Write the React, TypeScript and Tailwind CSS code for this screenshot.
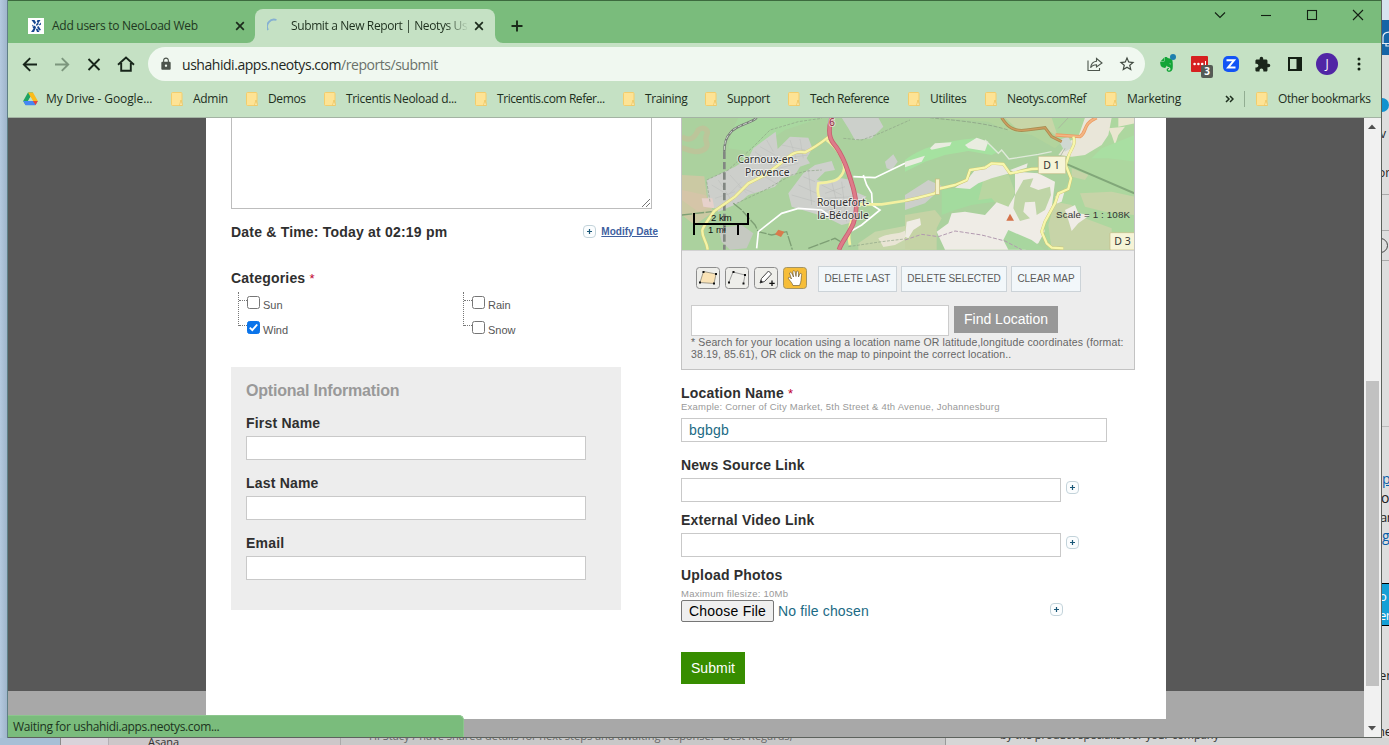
import React from "react";
import { MdExtension, MdStarBorder, MdLock } from "react-icons/md";
import { FaEvernote } from "react-icons/fa";

const UI = "font-['Open_Sans','Noto_Sans',sans-serif]";

function Folder() {
  return (
    <svg width="12" height="14" viewBox="0 0 12 14" className="shrink-0">
      <rect x="0.5" y="0.5" width="10.5" height="13" rx="1" fill="#fde395" stroke="#f3cd6c" />
      <path d="M10 8 L11.5 13.5 H8.5 Z" fill="#fdeeb5" stroke="#edc45e" strokeWidth="0.8" />
    </svg>
  );
}

function Drive() {
  return (
    <svg width="15" height="14" viewBox="0 0 15 14" className="shrink-0">
      <path d="M5 0.5 H10 L7.5 4.8 L2.6 13 L0.2 9 Z" fill="#1fa463" />
      <path d="M5 0.5 H10 L14.8 9 H9.9 Z" fill="#fbbc1b" />
      <path d="M0.2 9 H14.8 L12.4 13.3 H2.6 Z" fill="#4687f4" />
      <path d="M9.9 9 H14.8 L12.6 13 Z" fill="#e94335" />
      <path d="M7.5 5 L9.8 9 H5.2 Z" fill="#c5e1c4" />
    </svg>
  );
}

const bookmarks: { label: string; cls: string; text: string }[] = [
  { label: "Admin", cls: "w-[75px]", text: "tracking-[-0.3px]" },
  { label: "Demos", cls: "w-[78px]", text: "tracking-[-0.35px]" },
  { label: "Tricentis Neoload d...", cls: "w-[151px]", text: "tracking-[-0.32px]" },
  { label: "Tricentis.com Refer...", cls: "w-[148px]", text: "tracking-[-0.42px]" },
  { label: "Training", cls: "w-[82px]", text: "tracking-[-0.4px]" },
  { label: "Support", cls: "w-[83px]", text: "tracking-[-0.3px]" },
  { label: "Tech Reference", cls: "w-[120px]", text: "tracking-[-0.5px]" },
  { label: "Utilites", cls: "w-[77px]", text: "tracking-[-0.3px]" },
  { label: "Neotys.comRef", cls: "w-[120px]", text: "tracking-[-0.4px]" },
  { label: "Marketing", cls: "w-[120px]", text: "tracking-[-0.3px]" },
];

function Cross({ size }: { size: number }) {
  return (
    <svg width={size} height={size} viewBox="0 0 10 10" className="shrink-0">
      <path d="M1.2 1.2 L8.8 8.8 M8.8 1.2 L1.2 8.8" stroke="#1c2b1c" strokeWidth="1.7" />
    </svg>
  );
}

function TabBar() {
  return (
    <div className="flex h-[43px] border-t border-[#3c6a3e] bg-[#7abc7c]">
      <div className="flex h-full w-[247px] items-center pt-[8px] pl-[20px]">
        <svg width="16" height="16" viewBox="0 0 16 16" className="shrink-0">
          <rect width="16" height="16" fill="#fff" />
          <g fill="#17468f">
            <path d="M3.500 2 H6.500 L8 4.500 L6.800 6.500 Z M9.500 2 H12.500 L10.200 5.500 L8.700 3.500 Z" />
            <path d="M8 6.500 L9.500 4.800 L11 6 L8.500 8 Z M11 6.500 L13 4.500 V6.500 L11.500 7.500 Z" />
            <path d="M4 6.500 L6 8 L4.500 8.500 Z M4.500 9 L7 7.500 L8 9.500 L6 14 H3 L5.500 10.500 Z" />
            <path d="M9 9 L10.500 8 L13 12 L11 12.500 Z M7.800 11 L9.300 10.500 L11.500 14 H9 Z" />
          </g>
        </svg>
        <span className="ml-[8px] w-[183px] text-[12px] tracking-[-0.270px] whitespace-nowrap text-[#213821]">
          Add users to NeoLoad Web
        </span>
        <Cross size={10} />
      </div>
      <div className="relative mt-[8px] flex h-[34px] w-[240px] items-center rounded-t-[8px] bg-[#c5e1c4] pl-[12px]">
        <svg width="8" height="8" viewBox="0 0 8 8" className="absolute bottom-0 left-[-8px]">
          <path d="M8 0 V8 H0 A8 8 0 0 0 8 0" fill="#c5e1c4" />
        </svg>
        <svg width="8" height="8" viewBox="0 0 8 8" className="absolute right-[-8px] bottom-0">
          <path d="M0 0 V8 H8 A8 8 0 0 1 0 0" fill="#c5e1c4" />
        </svg>
        <svg width="14" height="16" viewBox="0 0 14 16" className="shrink-0">
          <path d="M1 12 A7 7 0 0 1 9.5 2" fill="none" stroke="#86b0d2" strokeWidth="1.800" />
        </svg>
        <span className="ml-[10px] w-[183px] bg-[linear-gradient(to_right,#1d2f1d_155px,#c5e1c4_178px)] bg-clip-text text-[12px] tracking-[-0.380px] whitespace-nowrap text-transparent">
          Submit a New Report | Neotys Us
        </span>
        <Cross size={10} />
      </div>
      <svg width="12" height="12" viewBox="0 0 12 12" className="mt-[19px] ml-[16px]">
        <path d="M6 0.5 V11.5 M0.5 6 H11.5" stroke="#1a2a1a" strokeWidth="1.9" />
      </svg>
      <svg width="152" height="14" viewBox="0 0 152 14" className="mt-[7px] mr-[15px] ml-auto" fill="none" stroke="#132013" strokeWidth="1.1">
        <path d="M1 4.5 L6 9.5 L11 4.5" />
        <path d="M47 7.5 H57" />
        <rect x="93.5" y="2.5" width="9" height="9" />
        <path d="M139 2 L149 12 M149 2 L139 12" />
      </svg>
    </div>
  );
}

function Toolbar() {
  return (
    <div className="flex h-[40px] items-center bg-[#c5e1c4] pt-[2px] pl-[14px]">
      <svg width="120" height="20" viewBox="0 0 120 20" fill="none" stroke="#17251a" strokeWidth="1.9" className="shrink-0">
        <path d="M15 10.500 H2 M8.2 4.1 L1.8 10.500 L8.2 16.900" />
        <path d="M33 10.500 H46 M39.8 4.1 L46.2 10.500 L39.8 16.900" stroke="#7c967d" />
        <path d="M66.5 5 L77.5 16 M77.5 5 L66.5 16" />
        <path d="M96 10.700 L104 3.500 L112 10.700 M99.2 9 V16.800 H108.8 V9" />
      </svg>
      <div className="ml-[6px] flex h-[34px] w-[997px] items-center rounded-full bg-[#f0f8f0] pl-[11px]">
        <MdLock size={14} color="#4b534b" />
        <span className="ml-[9px] text-[14px] tracking-[-0.460px] whitespace-nowrap text-[#1f281f]">
          ushahidi.apps.neotys.com<span className="text-[#6a716a]">/reports/submit</span>
        </span>
        <svg width="16" height="15" viewBox="0 0 16 15" className="mr-[15px] ml-auto" fill="none" stroke="#4d564d" strokeWidth="1.1">
          <path d="M1 3.5 V13.5 H12.5 V11" />
          <path d="M9.5 1.5 L15 6 L9.5 10 V7.7 C7 7.7 5 8.6 3.6 10.8 C4 7 6 4.6 9.5 4.2 Z" />
        </svg>
        <MdStarBorder size={18} color="#414a41" className="mr-[9px]" />
      </div>
      <div className="flex flex-1 items-center pl-[13px]">
        <div className="relative h-[18px] w-[18px]">
          <FaEvernote size={17} color="#12a537" className="mt-[1px]" />
          <div className="absolute top-[-1px] right-0 h-[6px] w-[6px] rounded-full bg-[#1d7fae]" />
        </div>
        <div className="relative ml-[15px] h-[16px] w-[17px] rounded-[1px] bg-[#d6201f]">
          <svg width="17" height="16" viewBox="0 0 17 16" fill="#fff">
            <circle cx="3.6" cy="8" r="1.3" />
            <circle cx="7.4" cy="8" r="1.3" />
            <circle cx="11.2" cy="8" r="1.3" />
            <rect x="14" y="5" width="1" height="6" />
          </svg>
          <div className="absolute top-[9px] left-[10px] flex h-[13px] w-[12px] items-center justify-center rounded-[2px] bg-[#555b55] text-[10px] font-bold text-white">
            3
          </div>
        </div>
        <div className="ml-[15px] flex h-[16px] w-[16px] items-center justify-center rounded-[5px] bg-[#1354f5]">
          <svg width="10" height="10" viewBox="0 0 10 10" fill="none" stroke="#fff" strokeWidth="2">
            <path d="M0.5 1.3 H8 L2 8.6 H9.5" />
          </svg>
        </div>
        <MdExtension size={17} color="#1a261a" className="ml-[15px]" />
        <svg width="14" height="14" viewBox="0 0 14 14" className="ml-[17px]">
          <rect x="1" y="1" width="12" height="12" fill="none" stroke="#142014" strokeWidth="2" />
          <rect x="8.5" y="1" width="4.5" height="12" fill="#142014" />
        </svg>
        <div className="ml-[14px] flex h-[22px] w-[22px] items-center justify-center rounded-full bg-[#5126a5] text-[12px] text-white">
          J
        </div>
        <svg width="4" height="14" viewBox="0 0 4 14" className="ml-[19px]" fill="#142014">
          <circle cx="2" cy="2" r="1.5" />
          <circle cx="2" cy="7" r="1.5" />
          <circle cx="2" cy="12" r="1.5" />
        </svg>
      </div>
    </div>
  );
}

function Bookmarks() {
  return (
    <div className="flex h-[35px] items-center border-b border-[#a3b3a3] bg-[#c5e1c4] pb-[2px] pl-[15px] text-[12px] text-[#1d2e1d]">
      <div className="flex w-[148px] items-center gap-[8px] tracking-[-0.100px] whitespace-nowrap">
        <Drive />
        My Drive - Google...
      </div>
      {bookmarks.map((b) => (
        <div key={b.label} className={"flex shrink-0 items-center gap-[10px] whitespace-nowrap " + b.cls}>
          <Folder />
          <span className={b.text}>{b.label}</span>
        </div>
      ))}
      <svg width="9" height="8" viewBox="0 0 9 8" fill="none" stroke="#1d2e1d" strokeWidth="1.5">
        <path d="M1 1 L4 4 L1 7 M5 1 L8 4 L5 7" />
      </svg>
      <div className="mr-[11px] ml-[10px] h-[16px] w-px bg-[#92ad92]" />
      <div className="flex items-center gap-[10px] tracking-[-0.400px] whitespace-nowrap">
        <Folder />
        Other bookmarks
      </div>
    </div>
  );
}

function MapView() {
  return (
    <svg width="452" height="132" viewBox="682 118 452 132" className="block font-['Noto_Sans',sans-serif]">
      <rect x="682" y="118" width="452" height="132" fill="#abd19e" />
      <g transform="translate(675 115) scale(.33333)">
        <path d="M20 65 C50 85 62 60 70 45 C85 32 102 45 95 60 C85 80 105 85 92 100 C70 120 40 105 20 98" fill="none" stroke="#bcc59a" strokeWidth="16" />
        <path d="M20 180 L88 184 L95 240 L115 290 L60 330 L20 300 Z" fill="#cbc9a3" />
        <path d="M20 225 L90 240 L110 275 L70 290 L20 255 Z" fill="#d5c5a8" />
        <path d="M190 8 L440 8 L330 45 L230 110 L160 100 L170 50 Z" fill="#a9d8a0" />
        <path d="M95 195 L180 155 L220 130 L235 100 L302 50 L308 102 L345 65 L400 68 L412 100 L395 130 L405 145 L375 155 L360 180 L320 190 L300 215 L270 225 L220 240 L190 265 L130 290 L100 260 Z" fill="#cdcfcb" />
        <g stroke="#b9bab9" strokeWidth="1.3" fill="none">
          <path d="M110 210 L160 240 L200 200 M130 195 L175 265 M165 180 L215 235 M240 110 L290 150 M255 95 L300 120 M275 75 L295 110 M320 90 L390 105 M330 130 L400 120 M310 160 L370 145 M190 215 L240 235 M230 160 L310 210 M345 75 L365 135 M375 72 L385 130 M120 250 L180 230" />
        </g>
        <path d="M340 235 L385 175 L420 150 L470 138 L480 165 L450 170 L425 195 L445 200 L500 190 L530 195 L540 230 L575 245 L545 270 L540 320 L500 330 L450 305 L350 275 Z" fill="#ced0cc" />
        <g stroke="#b5b7b5" strokeWidth="1.3" fill="none">
          <path d="M350 240 L420 260 M370 210 L425 235 M385 185 L420 200 M440 210 L500 240 M450 235 L510 215 M440 290 L530 270 M470 200 L485 260 M500 200 L515 320 M400 160 L410 270 M450 250 L535 245 M460 310 L500 280" />
        </g>
        <path d="M500 8 L610 8 L625 35 L590 70 L540 75 L520 40 Z" fill="#ccd0cb" />
        <path d="M630 140 L655 118 L668 140 L650 165 L635 160 Z" fill="#ccd0cb" />
        <path d="M130 340 L200 330 L235 355 L215 400 L165 404 L140 380 Z" fill="#c5c9c1" />
        <path d="M80 250 L112 250 L118 280 L85 275 Z" fill="#e6d1cb" />
        <path d="M550 385 L600 350 L705 330 L705 404 L550 404 Z" fill="#c6d6aa" />
        <path d="M610 370 C650 350 660 365 705 340 L705 365 L660 390 L625 396 Z" fill="#e9e5d5" />
        <path d="M20 300 L110 290 M175 265 L200 285 L240 330 L250 350 L290 360 L335 350 L352 404 M400 400 L440 385 L480 370 L505 385" stroke="#7d9f74" strokeWidth="4" fill="none" strokeDasharray="32 4" />
        <path d="M95 195 L160 165 L235 95 L285 45 L370 20 L440 10 M185 265 L270 225 L350 180 L395 168 L440 165 M505 70 L560 75 L615 55 L705 15 M520 395 L620 380 L705 370 M95 200 L105 260" stroke="#8ea386" strokeWidth="2" fill="none" strokeDasharray="9 4" />
        <path d="M148 110 L148 404" stroke="#828782" strokeWidth="8" fill="none" strokeDasharray="22 9" />
        <path d="M245 8 C230 25 180 30 165 55 C150 70 148 90 148 110" stroke="#777c77" strokeWidth="7" fill="none" />
        <path d="M245 8 C230 25 180 30 165 55 C150 70 148 90 148 110" stroke="#c8d0c8" strokeWidth="3" fill="none" strokeDasharray="12 5" />
        <path d="M245 400 L250 350 L320 295 L370 280 L440 285 L460 300 M535 185 L600 188 L690 145 M565 180 L575 210 L590 235 L592 270 L615 285 L560 330 L525 350" stroke="#fff" strokeWidth="5" fill="none" />
        <path d="M462 65 C430 90 415 100 390 112 C350 105 340 130 310 150 L270 180 L220 205 L180 245 L118 288 C110 300 90 325 82 345 C80 370 95 375 98 404" stroke="#d2c96f" strokeWidth="9" fill="none" />
        <path d="M462 65 C430 90 415 100 390 112 C350 105 340 130 310 150 L270 180 L220 205 L180 245 L118 288 C110 300 90 325 82 345 C80 370 95 375 98 404" stroke="#f4f3a6" strokeWidth="7" fill="none" />
        <path d="M455 75 C480 95 505 120 508 160 C500 200 470 200 430 205 C425 230 430 245 440 265 M540 268 L620 268 L705 255 M540 300 C520 320 520 370 525 390" stroke="#f3f0a0" strokeWidth="8" fill="none" />
        <path d="M470 8 C460 40 460 65 475 85 C505 120 520 170 535 220 C545 260 548 290 535 325 C520 360 500 380 492 404" stroke="#c75f70" strokeWidth="14" fill="none" />
        <path d="M470 8 C460 40 460 65 475 85 C505 120 520 170 535 220 C545 260 548 290 535 325 C520 360 500 380 492 404" stroke="#de7b89" strokeWidth="9" fill="none" />
        <path d="M300 358 L310 344 L328 350 L318 366 Z" fill="#d97a4c" />
      </g>
      <g transform="translate(905 115) scale(.33333)">
        <path d="M20 8 L450 8 L455 50 L470 80 L450 100 L380 60 L300 45 L250 20 L120 10 Z" fill="#b2d49d" />
        <path d="M300 8 H580 L540 60 L460 65 L420 40 L340 45 Z" fill="#c8d6a8" />
        <path d="M0 135 C60 90 140 75 220 70 L250 85 L280 110 L260 120 L190 108 L120 120 L60 140 L0 170 Z" fill="#a5e2a0" />
        <path d="M0 240 L70 195 L115 215 L60 265 L0 285 Z" fill="#cccfca" />
        <path d="M75 100 L90 85 L140 82 L135 92 L80 104 Z M180 90 L215 68 L250 80 L240 108 L190 100 Z M0 140 L60 122 L50 140 L0 157 Z" fill="#e9ece0" />
        <path d="M0 300 L90 285 L110 310 L95 340 L95 404 L0 404 Z" fill="#c5d3a5" />
        <path d="M5 320 L45 310 L48 330 L25 345 L10 370 L0 365 Z" fill="#efece4" />
        <path d="M110 225 L190 215 L260 190 L310 180 L300 230 L270 260 L200 270 L150 285 L110 300 Z" fill="#a3db9e" />
        <path d="M235 195 L310 178 L330 230 L315 270 L290 285 L260 250 L220 255 Z" fill="#b9d6a1" />
        <path d="M95 350 L130 325 L140 295 L180 290 L240 300 L275 262 L310 275 L330 240 L330 170 L400 175 L450 200 L435 320 L400 385 L360 404 L120 404 Z" fill="#efece6" />
        <path d="M150 218 L190 190 L210 165 L260 145 L290 145 L315 175 L260 190 L220 205 L195 222 Z" fill="#eae9e2" />
        <path d="M330 240 L355 195 L385 190 L375 215 L400 225 L435 215 L438 240 L420 285 L395 300 L390 260 L360 262 L355 290 L375 310 L345 318 L325 280 Z" fill="#bfd5a7" />
        <path d="M440 8 L680 8 L688 20 L688 404 L430 404 L415 330 L470 230 L500 190 L480 130 Z" fill="#add79f" />
        <path d="M540 8 L620 8 L610 60 L590 90 L540 120 L500 125 L460 120 L490 80 L520 65 Z" fill="#e9e6d9" />
        <path d="M610 40 L660 35 L640 60 L630 90 L620 60 Z M640 8 L690 8 L690 25 L640 35 Z" fill="#e9e6cf" />
        <path d="M590 100 L688 60 L688 140 L610 130 L560 130 Z" fill="#a9dfa2" />
        <path d="M525 235 L620 230 L688 245 L688 300 L600 290 L540 275 Z M450 260 L500 270 L540 310 L620 340 L620 404 L440 404 L430 330 Z" fill="#c7d4a8" />
        <path d="M500 160 L550 180 L540 195 L500 185 Z" fill="#c7d4a8" />
        <path d="M450 245 L480 225 L470 260 L450 268 Z M480 285 L510 270 L520 295 L555 300 L520 325 L500 348 L490 315 Z" fill="#efece6" />
        <path d="M460 75 L490 65 L505 95 L480 110 Z" fill="#cfd8d2" />
        <path d="M295 375 L310 345 L380 375 L420 404 L310 404 Z" fill="#a8d69f" />
        <path d="M75 8 C130 15 230 20 310 45" stroke="#8da287" strokeWidth="2.5" fill="none" strokeDasharray="12 4" />
        <path d="M240 75 L280 115 L290 105 L312 132 L400 118 L440 110" stroke="#dfe9d9" strokeWidth="4" fill="none" />
        <path d="M480 145 L688 235" stroke="#81a779" strokeWidth="6" fill="none" />
        <path d="M480 100 L465 125 M460 40 L490 8" stroke="#a9b59c" strokeWidth="2.5" fill="none" />
        <path d="M290 8 C310 40 330 50 365 45 L420 38 L440 65 L470 80" stroke="#a98d51" strokeWidth="9" fill="none" />
        <path d="M290 8 C310 40 330 50 365 45 L420 38 L440 65 L470 80" stroke="#ce9d5f" strokeWidth="4" fill="none" />
        <path d="M452 60 L525 65 C548 50 530 28 575 8" stroke="#eb9c63" strokeWidth="10" fill="none" />
        <path d="M452 60 L525 65 C548 50 530 28 575 8" stroke="#f4b583" strokeWidth="5" fill="none" />
        <path d="M0 257 L40 248 L90 235 L98 222 L150 210 L185 195 L195 165 L240 158 L260 145 L295 147 L315 175 L380 162 L480 158 M505 65 C515 90 495 105 490 125 L482 150 L498 190 L490 222 L460 235 L450 265 L420 320 L410 350 L425 385 L440 398 L475 400" stroke="#cbc26e" strokeWidth="9" fill="none" strokeLinejoin="round" />
        <path d="M0 257 L40 248 L90 235 L98 222 L150 210 L185 195 L195 165 L240 158 L260 145 L295 147 L315 175 L380 162 L480 158 M505 65 C515 90 495 105 490 125 L482 150 L498 190 L490 222 L460 235 L450 265 L420 320 L410 350 L425 385 L440 398 L475 400" stroke="#f7f7ab" strokeWidth="7" fill="none" strokeLinejoin="round" />
        <rect x="92" y="192" width="12" height="46" fill="#f4f1c8" stroke="#c7bd7c" strokeWidth="2" />
        <path d="M315 165 L368 145 L365 158 L325 170 Z" fill="#ebeae3" />
        <path d="M0 375 L50 358 L100 365 L150 348 L230 360 L300 378 L350 404" stroke="#b29ab0" strokeWidth="3" fill="none" strokeDasharray="12 5" />
        <path d="M304 317 L315 296 L327 317 Z" fill="#d5724a" />
        <rect x="400" y="124" width="82" height="52" rx="3" fill="#f6f4d7" stroke="#c6bd87" strokeWidth="2" />
        <rect x="615" y="353" width="90" height="52" rx="3" fill="#f6f4d7" stroke="#c6bd87" strokeWidth="2" />
      </g>
      <g fontSize="10.300" fill="#333" textAnchor="middle" stroke="#fff" strokeWidth="2" strokeOpacity=".55" paintOrder="stroke">
        <text x="767.300" y="163">Carnoux-en-</text>
        <text x="767.300" y="176">Provence</text>
        <text x="843" y="206">Roquefort-</text>
        <text x="843" y="219">la-Bédoule</text>
        <text x="832" y="126" fill="#8f2c3d">6</text>
      </g>
      <g fontSize="10.500" fill="#333" textAnchor="middle">
        <text x="1051.500" y="169">D 1</text>
        <text x="1122.500" y="245">D 3</text>
      </g>
      <g stroke="#000" strokeWidth="2" fill="none">
        <path d="M694 213 V235 M693 224 H749 M748 213 V225 M738 224 V235" />
      </g>
      <g fill="#111" className="font-['Liberation_Sans',sans-serif]" fontSize="9.500">
        <text x="711" y="221">2 km</text>
        <text x="708" y="233">1 mi</text>
      </g>
      <text x="1056" y="218" fontSize="9.800" textLength="74" fill="#333" className="font-['Liberation_Sans',sans-serif]">Scale = 1 : 108K</text>
    </svg>
  );
}

function Plus({ className = "" }: { className?: string }) {
  return (
    <svg width="13" height="13" viewBox="0 0 13 13" className={"shrink-0 " + className}>
      <rect x="0.5" y="0.5" width="12" height="12" rx="3.500" fill="#fbfdfe" stroke="#c3d3da" />
      <path d="M6.500 4 V9 M4 6.500 H9" stroke="#1b5878" strokeWidth="1.200" />
    </svg>
  );
}

function Check({ label, on }: { label: string; on?: boolean }) {
  return (
    <div className="flex h-[25px] items-start">
      <div className="mt-[10px] w-[8px] border-t border-dotted border-[#777]" />
      <svg width="13" height="13" viewBox="0 0 13 13" className="mt-[6px]">
        <rect x="0.500" y="0.500" width="12" height="12" rx="2" fill={on ? "#0b74ea" : "#fff"} stroke={on ? "#0b74ea" : "#767676"} />
        {on && <path d="M2.800 6.700 L5.300 9.200 L10.200 3.500" fill="none" stroke="#fff" strokeWidth="1.900" />}
      </svg>
      <span className="mt-[7px] ml-[3px] text-[11px] leading-[16px] text-[#555]">{label}</span>
    </div>
  );
}

function CheckGroup({ items }: { items: { label: string; on?: boolean }[] }) {
  return (
    <div className="flex w-[225px] shrink-0">
      <div className="mt-[2px] h-[34px] w-px border-l border-dotted border-[#777]" />
      <div>
        {items.map((i) => (
          <Check key={i.label} {...i} />
        ))}
      </div>
    </div>
  );
}

const LABEL = "h-[18px] text-[14px] font-bold leading-[18px] tracking-[0.200px] whitespace-nowrap text-[#2f2f2f]";

function Required() {
  return <span className="text-[13px] font-normal text-[#c00030]">*</span>;
}

function TextField({ label }: { label: string }) {
  return (
    <div className="h-[60px]">
      <div className={LABEL}>{label}</div>
      <div className="mt-[4px] h-[24px] w-[340px] border border-[#c9c9c9] bg-white" />
    </div>
  );
}

function LeftColumn() {
  return (
    <div className="w-[450px] shrink-0">
      <div className="relative h-[91px] w-[421px] border border-t-0 border-[#bdbdbd] bg-white">
        <svg width="10" height="10" viewBox="0 0 10 10" className="absolute right-0 bottom-0" stroke="#666" strokeWidth="0.900">
          <path d="M1 9 L9 1 M5 9 L9 5" />
        </svg>
      </div>
      <div className="mt-[13px] flex h-[20px] w-[427px] items-center">
        <span className={LABEL}>Date &amp; Time: Today at 02:19 pm</span>
        <Plus className="mb-[1px] ml-auto" />
        <span className="mb-[2px] ml-[5px] text-[10px] font-bold text-[#3e5f9f] underline">Modify Date</span>
      </div>
      <div className="mt-[27px] h-[21px]">
        <div className={LABEL}>
          Categories <Required />
        </div>
      </div>
      <div className="flex h-[50px] pl-[7px]">
        <CheckGroup items={[{ label: "Sun" }, { label: "Wind", on: true }]} />
        <CheckGroup items={[{ label: "Rain" }, { label: "Snow" }]} />
      </div>
      <div className="mt-[27px] h-[243px] w-[390px] bg-[#ededed] pt-[14px] pl-[15px]">
        <div className="mb-[13px] text-[16px] leading-[20px] font-bold tracking-[-0.200px] text-[#999]">Optional Information</div>
        <TextField label="First Name" />
        <TextField label="Last Name" />
        <TextField label="Email" />
      </div>
    </div>
  );
}

function ToolIcon({ active, children }: { active?: boolean; children: React.ReactNode }) {
  return (
    <svg width="24" height="22" viewBox="0 0 24 22" className="mr-[5px] mb-[2px] shrink-0">
      <rect x="0.500" y="0.500" width="23" height="21" rx="3" fill={active ? "#f6bd38" : "#eeeeea"} stroke={active ? "#a39465" : "#8d8d8d"} />
      {children}
    </svg>
  );
}

const BTN = "flex h-[26px] shrink-0 items-center justify-center border border-[#ccd3d8] bg-[#f2f7fa] pb-px text-[10px] tracking-[-0.080px] text-[#5b5b5b] whitespace-nowrap";

function MapPanel() {
  return (
    <div className="h-[252px] w-[454px] border border-t-0 border-[#c3c3c3] bg-[#ededed]">
      <MapView />
      <div className="border-t border-[#d2d2d2] pl-[9px]">
        <div className="mt-[15px] flex h-[26px] items-center pl-[5px]">
          <ToolIcon>
            <path d="M4 15.500 L7.500 4.500 L20 7 L18 16.500 Z" fill="#fae3b6" stroke="#8b8776" strokeWidth="0.800" />
            <path d="M3 14.500h2v2h-2z M6.500 4h2v2h-2z M19 6h2v2h-2z M17 15.500h2v2h-2z" fill="#111" />
          </ToolIcon>
          <ToolIcon>
            <path d="M4 15 L8 5 L20 8 L18.500 16" fill="none" stroke="#888" strokeWidth="0.800" />
            <path d="M3 14.500h2v2h-2z M7.500 4h2v2h-2z M19 7h2v2h-2z M17.500 15.500h2v2h-2z" fill="#111" />
          </ToolIcon>
          <ToolIcon>
            <path d="M6 16 L7.500 11.500 L14.500 4 L17.500 7 L10.500 14.500 Z" fill="#fff" stroke="#444" strokeWidth="1" />
            <path d="M6 16 L7 13 L9 15 Z" fill="#222" />
            <path d="M18 13.500 V19 M15.300 16.300 H20.700" stroke="#111" strokeWidth="1.300" />
          </ToolIcon>
          <ToolIcon active>
            <path d="M10 18.500 C9 15.500 6.500 13.500 5 11 C6 9.500 7.500 10.500 8.500 12 L6.500 6 C7.500 4.500 8.700 5.500 9.200 7 L10.500 10 L9.800 4.500 C11 3 12 4 12.200 5.500 L13 9.500 L13.500 4.500 C14.500 3.500 15.700 4.200 15.500 6 L15.500 10 L17 6.500 C18.500 6 19 7 18.500 8.500 C18 12 18.500 14.500 16.500 18.500 Z" fill="#fff" stroke="#5c4a25" strokeWidth="0.600" />
          </ToolIcon>
          <div className={BTN + " ml-[6px] w-[79px]"}>DELETE LAST</div>
          <div className={BTN + " ml-[4px] w-[106px]"}>DELETE SELECTED</div>
          <div className={BTN + " ml-[4px] w-[70px]"}>CLEAR MAP</div>
        </div>
        <div className="mt-[13px] flex h-[31px] items-start">
          <div className="h-[31px] w-[258px] border border-[#ccc] bg-white" />
          <div className="mt-[1px] ml-[5px] flex h-[27px] w-[104px] items-center justify-center bg-[#989898] text-[14px] text-white">
            Find Location
          </div>
        </div>
        <div className="text-[10.500px] leading-[12px] tracking-[0.135px] whitespace-nowrap text-[#666]">
          * Search for your location using a location name OR latitude,longitude coordinates (format:
          <br />
          38.19, 85.61), OR click on the map to pinpoint the correct location..
        </div>
      </div>
    </div>
  );
}

function RightColumn() {
  return (
    <div className="w-[460px]">
      <MapPanel />
      <div className="mt-[14px]">
        <div className={LABEL}>
          Location Name <Required />
        </div>
        <div className="text-[9.500px] leading-[10px] tracking-[0.220px] whitespace-nowrap text-[#999]">
          Example: Corner of City Market, 5th Street &amp; 4th Avenue, Johannesburg
        </div>
        <div className="mt-[6px] flex h-[24px] w-[426px] items-center border border-[#c9c9c9] pl-[7px] text-[14px] tracking-[0.200px] text-[#1b6a84]">
          bgbgb
        </div>
      </div>
      <div className="mt-[14px] h-[55px]">
        <div className={LABEL}>News Source Link</div>
        <div className="mt-[4px] flex">
          <div className="h-[24px] w-[380px] border border-[#c9c9c9]" />
          <Plus className="mt-[3px] ml-[5px]" />
        </div>
      </div>
      <div className="h-[55px]">
        <div className={LABEL}>External Video Link</div>
        <div className="mt-[4px] flex">
          <div className="h-[24px] w-[380px] border border-[#c9c9c9]" />
          <Plus className="mt-[3px] ml-[5px]" />
        </div>
      </div>
      <div className={LABEL}>Upload Photos</div>
      <div className="mt-[4px] mb-[1px] text-[9.500px] leading-[11px] tracking-[0.240px] text-[#999]">Maximum filesize: 10Mb</div>
      <div className="flex h-[22px] w-[382px] items-center text-[14px]">
        <div className="flex h-[22px] w-[93px] items-center justify-center rounded-[2px] border border-[#767676] bg-[#efefef] tracking-[0.230px] text-black">
          Choose File
        </div>
        <span className="ml-[4px] tracking-[0.150px] text-[#1b6a84]">No file chosen</span>
        <Plus className="mb-[3px] ml-auto" />
      </div>
      <div className="mt-[30px] flex h-[32px] w-[64px] items-center justify-center bg-[#378d00] text-[14px] tracking-[0.100px] text-white">
        Submit
      </div>
    </div>
  );
}

function Scrollbar() {
  return (
    <div className="flex w-[17px] flex-col items-center bg-[#f1f1f1] pr-px">
      <svg width="8" height="5" viewBox="0 0 8 5" className="mt-[6px]">
        <path d="M0 5 L4 0.500 L8 5 Z" fill="#505050" />
      </svg>
      <div className="mt-[252px] h-[305px] w-[13px] bg-[#c1c1c1]" />
      <svg width="8" height="5" viewBox="0 0 8 5" className="mt-[40px]">
        <path d="M0 0 L4 4.500 L8 0 Z" fill="#505050" />
      </svg>
    </div>
  );
}

function BehindRight() {
  return (
    <div className="w-[8px] shrink-0 overflow-hidden bg-[#dedede] text-[12px] leading-[16px] text-[#222]">
      <div className="h-[20px] bg-[#d7e3f0]" />
      <div className="h-[35px] bg-[#1565a6] pt-[11px]">
        <svg width="8" height="16" viewBox="0 0 8 16" fill="none" stroke="#e6eef6" strokeWidth="1.200">
          <path d="M1 12 V6 C1 2 5 1 8 1 M0 12.500 H8 M4 13 V15 H8" />
        </svg>
      </div>
      <div className="h-[43px]" />
      <div className="h-[14px] w-[7px] rounded-r-full bg-[#1292cf]" />
      <div className="mt-[14px] ml-[-2px] h-[39px]">v</div>
      <div className="ml-[-4px] h-[17px]">or</div>
      <div className="h-[13px] border-b border-[#aaa]" />
      <div className="mt-[35px] h-[31px] border-y border-[#aaa]">
        <div className="mt-[7px] ml-[-9px] h-[15px] w-[15px] rounded-full border border-[#444]" />
      </div>
      <div className="h-[166px] border-b border-[#bbb]" />
      <div className="mt-[44px] h-[19px] text-[14px] text-[#0b5ea9] underline">p</div>
      <div className="ml-[-1px] h-[19px] text-[14px]">o</div>
      <div className="ml-[-2px] h-[19px] text-[13px] tracking-[-0.500px]">an</div>
      <div className="h-[19px] text-[14px] text-[#0b5ea9] underline">g</div>
      <div className="mt-[36px] h-[43px] border-y border-black bg-[#14a0d6] pt-[3px] text-[13px] leading-[19px] text-white">
        <div className="ml-[-3px]">o</div>
        <div className="ml-[-3px] tracking-[-0.500px]">er</div>
      </div>
      <div className="mt-[41px] ml-[-3px] h-[56px] text-[13px]">er</div>
      <div className="ml-[-5px] text-[13px] tracking-[-0.300px]">ne</div>
    </div>
  );
}

export default function App() {
  return (
    <div className={"h-[745px] w-[1389px] overflow-hidden bg-[#cfcfcf] " + UI}>
      <div className="flex h-[738px]">
        <div className="w-[8px] shrink-0 border-r border-[#5f7f86] bg-gradient-to-r from-[#b4c9df] to-[#9fb5cb]" />
        <div className="relative flex w-[1374px] shrink-0 flex-col border-r border-b border-[#5d625d]">
          <TabBar />
          <Toolbar />
          <Bookmarks />
          <div className="flex min-h-0 flex-1">
            <div className="flex w-[1356px] bg-[linear-gradient(to_bottom,#585858_573px,#a8a8a8_573px)]">
              <div className="ml-[198px] flex h-[601px] w-[960px] bg-white pl-[25px] font-['Liberation_Sans',Arial,sans-serif]">
                <LeftColumn />
                <RightColumn />
              </div>
            </div>
            <Scrollbar />
          </div>
          <div className="absolute bottom-0 left-0 flex h-[22px] w-[456px] items-center rounded-tr-[5px] border-t border-r border-[#8cc68d] bg-[#7abc7c] pl-[5px] text-[12px] tracking-[-0.340px] text-[#1c331c]">
            Waiting for ushahidi.apps.neotys.com...
          </div>
        </div>
        <BehindRight />
      </div>
      <div className="flex h-[7px] overflow-hidden text-[11px] leading-[11px] text-[#333]">
        <div className="w-[60px] bg-[#a7bfd6]" />
        <div className="w-[48px] border-l border-[#8b8b8b] bg-[#d9d3da]" />
        <div className="w-[232px] border-l border-[#b5b0b5] bg-[#cdc7c9] pl-[39px]">
          <div className="mt-[-2px]">Asana</div>
        </div>
        <div className="w-[605px] border-l border-[#aaa] bg-[#c8c8c8] pl-[28px] text-[#666]">
          <div className="mt-[-8px] whitespace-nowrap">Hi Stacy / have shared details for next steps and awaiting response. - Best Regards,</div>
        </div>
        <div className="w-[444px] border-l border-[#999] bg-[#d6d6d6] pl-[54px]">
          <div className="mt-[-9px] whitespace-nowrap">by the product specialist for your company</div>
        </div>
      </div>
    </div>
  );
}
